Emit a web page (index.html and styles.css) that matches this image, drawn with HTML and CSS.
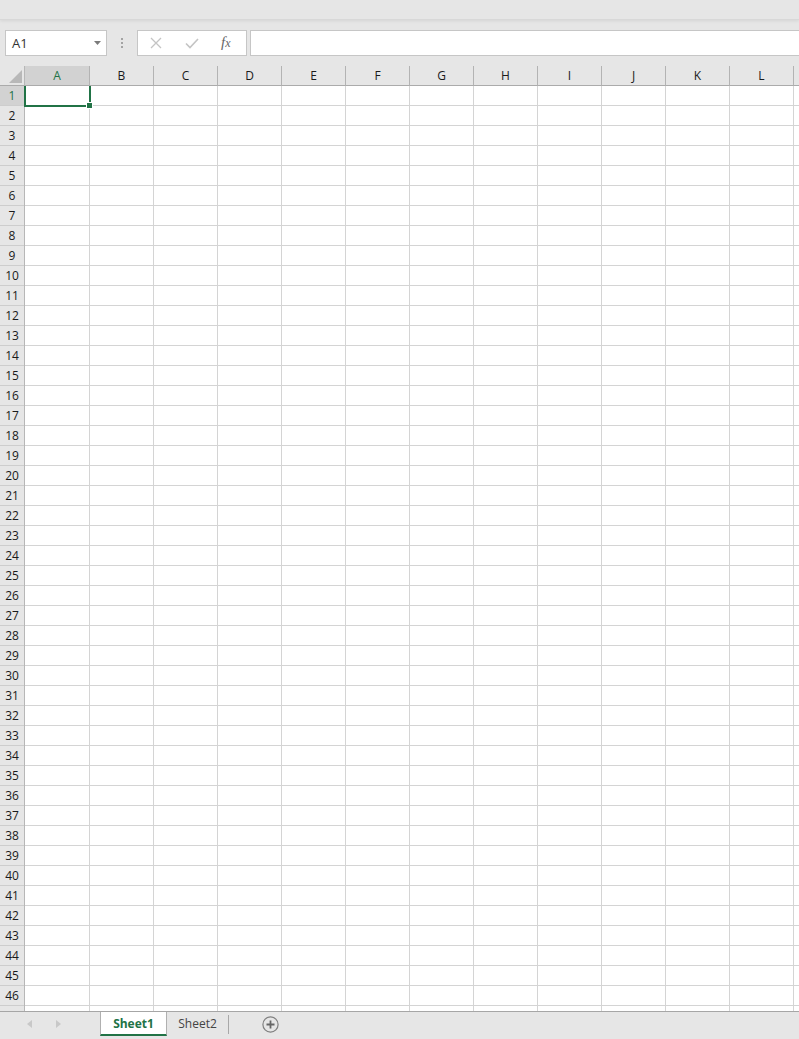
FILE: index.html
```html
<!DOCTYPE html>
<html>
<head>
    <meta charset="UTF-8">
    <meta name="viewport" content="width=device-width, initial-scale=1.0">
    <title>Book1 - Excel</title>
    <link rel="stylesheet" href="styles.css">
</head>
<body>
    <div class="top-strip"></div>

    <div class="formula-bar">
        <div class="name-box">
            <span>A1</span>
            <svg width="7" height="4" viewBox="0 0 7 4"><polygon points="0,0 7,0 3.5,4" fill="#7b7b7b"/></svg>
        </div>
        <div class="bar-dots"><i></i><i></i><i></i></div>
        <div class="fx-box">
            <svg class="fx-cancel" width="12" height="12" viewBox="0 0 12 12">
                <path d="M1 1 L11 11 M11 1 L1 11" stroke="#c4c4c4" stroke-width="1.3" fill="none"/>
            </svg>
            <svg class="fx-enter" width="14" height="11" viewBox="0 0 14 11">
                <path d="M1 5.5 L5 9.5 L13 1" stroke="#c4c4c4" stroke-width="1.6" fill="none"/>
            </svg>
            <span class="fx-insert">f<span>x</span></span>
        </div>
        <div class="formula-input"></div>
    </div>

    <div class="col-heads">
        <div class="corner">
            <svg width="13" height="13" viewBox="0 0 13 13"><polygon points="13,0 13,13 0,13" fill="#b8b8b8"/></svg>
        </div>
        <div class="col-head selected">A</div>
        <div class="col-head">B</div>
        <div class="col-head">C</div>
        <div class="col-head">D</div>
        <div class="col-head">E</div>
        <div class="col-head">F</div>
        <div class="col-head">G</div>
        <div class="col-head">H</div>
        <div class="col-head">I</div>
        <div class="col-head">J</div>
        <div class="col-head">K</div>
        <div class="col-head">L</div>
        <div class="col-head"></div>
    </div>

    <div class="sheet-body">
        <div class="row-heads">
            <div class="row-head selected">1</div>
            <div class="row-head">2</div>
            <div class="row-head">3</div>
            <div class="row-head">4</div>
            <div class="row-head">5</div>
            <div class="row-head">6</div>
            <div class="row-head">7</div>
            <div class="row-head">8</div>
            <div class="row-head">9</div>
            <div class="row-head">10</div>
            <div class="row-head">11</div>
            <div class="row-head">12</div>
            <div class="row-head">13</div>
            <div class="row-head">14</div>
            <div class="row-head">15</div>
            <div class="row-head">16</div>
            <div class="row-head">17</div>
            <div class="row-head">18</div>
            <div class="row-head">19</div>
            <div class="row-head">20</div>
            <div class="row-head">21</div>
            <div class="row-head">22</div>
            <div class="row-head">23</div>
            <div class="row-head">24</div>
            <div class="row-head">25</div>
            <div class="row-head">26</div>
            <div class="row-head">27</div>
            <div class="row-head">28</div>
            <div class="row-head">29</div>
            <div class="row-head">30</div>
            <div class="row-head">31</div>
            <div class="row-head">32</div>
            <div class="row-head">33</div>
            <div class="row-head">34</div>
            <div class="row-head">35</div>
            <div class="row-head">36</div>
            <div class="row-head">37</div>
            <div class="row-head">38</div>
            <div class="row-head">39</div>
            <div class="row-head">40</div>
            <div class="row-head">41</div>
            <div class="row-head">42</div>
            <div class="row-head">43</div>
            <div class="row-head">44</div>
            <div class="row-head">45</div>
            <div class="row-head">46</div>
            <div class="row-head"></div>
        </div>
        <div class="cells">
            <div class="active-cell"><span class="fill-handle"></span></div>
        </div>
    </div>

    <div class="tab-bar">
        <div class="tab-nav">
            <svg width="5" height="8" viewBox="0 0 5 8"><polygon points="5,0 5,8 0,4" fill="#c8c8c8"/></svg>
            <svg width="5" height="8" viewBox="0 0 5 8"><polygon points="0,0 0,8 5,4" fill="#c8c8c8"/></svg>
        </div>
        <div class="sheet-tab active">Sheet1</div>
        <div class="sheet-tab">Sheet2</div>
        <div class="tab-sep"></div>
        <div class="add-sheet">
            <svg width="17" height="17" viewBox="0 0 17 17">
                <circle cx="8.5" cy="8.5" r="7.6" stroke="#7f7f7f" stroke-width="1.2" fill="none"/>
                <path d="M8.5 4.5 V12.5 M4.5 8.5 H12.5" stroke="#666" stroke-width="1.8" fill="none"/>
            </svg>
        </div>
    </div>
</body>
</html>
```

FILE: styles.css
```css
body {
    margin: 0;
    height: 100vh;
    display: flex;
    flex-direction: column;
    overflow: hidden;
    font-family: "Open Sans", "Noto Sans", Arial, sans-serif;
    background-color: #e6e6e6;
    color: #1a1a1a;
}

.top-strip {
    height: 19px;
    flex-shrink: 0;
    background-color: #e6e6e6;
    border-bottom: 1px solid #d8d8d8;
    box-shadow: 0 1px 3px rgba(0, 0, 0, 0.08);
    position: relative;
    z-index: 1;
}

/* formula bar */

.formula-bar {
    height: 46px;
    flex-shrink: 0;
    box-sizing: border-box;
    padding-top: 10px;
    display: flex;
    align-items: flex-start;
}

.name-box {
    margin-left: 5px;
    width: 102px;
    height: 26px;
    box-sizing: border-box;
    border: 1px solid #c6c6c6;
    background-color: #fff;
    display: flex;
    align-items: center;
    justify-content: space-between;
    padding: 0 5px 0 6px;
    font-size: 13px;
    color: #333;
}

.bar-dots {
    width: 30px;
    display: flex;
    flex-direction: column;
    align-items: center;
    gap: 2px;
    padding-top: 8px;
}

.bar-dots i {
    width: 2px;
    height: 2px;
    background-color: #a3a3a3;
}

.fx-box {
    width: 110px;
    height: 26px;
    box-sizing: border-box;
    border: 1px solid #c6c6c6;
    background-color: #fff;
    display: flex;
    align-items: center;
    padding-left: 12px;
}

.fx-enter {
    margin-left: 23px;
}

.fx-insert {
    margin-left: 22px;
    margin-top: -2px;
    font-family: "Liberation Serif", "DejaVu Serif", serif;
    font-style: italic;
    font-size: 15px;
    color: #666;
    line-height: 1;
}

.fx-insert span {
    font-size: 12px;
}

.formula-input {
    flex: 1;
    margin-left: 3px;
    height: 26px;
    box-sizing: border-box;
    border: 1px solid #c6c6c6;
    border-right: none;
    background-color: #fff;
}

/* grid */

.col-heads {
    height: 20px;
    flex-shrink: 0;
    display: flex;
    overflow: hidden;
    background-color: #e6e6e6;
}

.corner {
    width: 25px;
    flex-shrink: 0;
    box-sizing: border-box;
    border-right: 1px solid #b7b7b7;
    border-bottom: 1px solid #ababab;
    display: flex;
    justify-content: flex-end;
    align-items: flex-end;
    padding: 0 2px 2px 0;
}

.col-head {
    width: 64px;
    flex-shrink: 0;
    box-sizing: border-box;
    border-right: 1px solid #b3b3b3;
    border-bottom: 1px solid #ababab;
    font-size: 12px;
    line-height: 19px;
    text-align: center;
}

.corner + .col-head {
    width: 65px;
}

.col-head.selected,
.row-head.selected {
    background-color: #d2d2d2;
    color: #217346;
}

.sheet-body {
    flex: 1;
    min-height: 0;
    display: flex;
    overflow: hidden;
    background-color: #fff;
    background-image: linear-gradient(to top, #d4d4d4 1px, transparent 1px);
    background-size: 100% 20px;
}

.row-heads {
    width: 25px;
    flex-shrink: 0;
    box-sizing: border-box;
    border-right: 1px solid #b7b7b7;
    background-color: #e6e6e6;
}

.row-head {
    height: 20px;
    box-sizing: border-box;
    padding-top: 1px;
    border-bottom: 1px solid #cdcdcd;
    font-size: 12px;
    line-height: 18px;
    text-align: center;
}

.cells {
    flex: 1;
    margin-left: 1px;
    position: relative;
    background-image: linear-gradient(to left, #d4d4d4 1px, transparent 1px);
    background-size: 64px 100%;
}

.active-cell {
    position: absolute;
    left: -2px;
    top: -2px;
    width: 67px;
    height: 23px;
    box-sizing: border-box;
    border: 2px solid #217346;
}

.fill-handle {
    position: absolute;
    right: -4px;
    bottom: -4px;
    width: 5px;
    height: 5px;
    background-color: #217346;
    border: 1px solid #fff;
}

/* sheet tabs */

.tab-bar {
    height: 28px;
    flex-shrink: 0;
    box-sizing: border-box;
    border-top: 1px solid #a6a6a6;
    display: flex;
    align-items: flex-start;
    background-color: #e6e6e6;
}

.tab-nav {
    width: 100px;
    height: 24px;
    box-sizing: border-box;
    padding-left: 27px;
    display: flex;
    align-items: center;
    gap: 24px;
}

.sheet-tab {
    width: 61px;
    height: 24px;
    box-sizing: border-box;
    padding-top: 2px;
    font-size: 12px;
    line-height: 20px;
    text-align: center;
    color: #444;
}

.sheet-tab.active {
    width: 67px;
    background-color: #fff;
    border-left: 1px solid #b0b0b0;
    border-right: 1px solid #b0b0b0;
    border-bottom: 2px solid #217346;
    color: #217346;
    font-weight: bold;
}

.tab-sep {
    width: 1px;
    height: 19px;
    margin-top: 3px;
    background-color: #a8a8a8;
}

.add-sheet {
    margin-left: 33px;
    margin-top: 4px;
    height: 17px;
}
```
